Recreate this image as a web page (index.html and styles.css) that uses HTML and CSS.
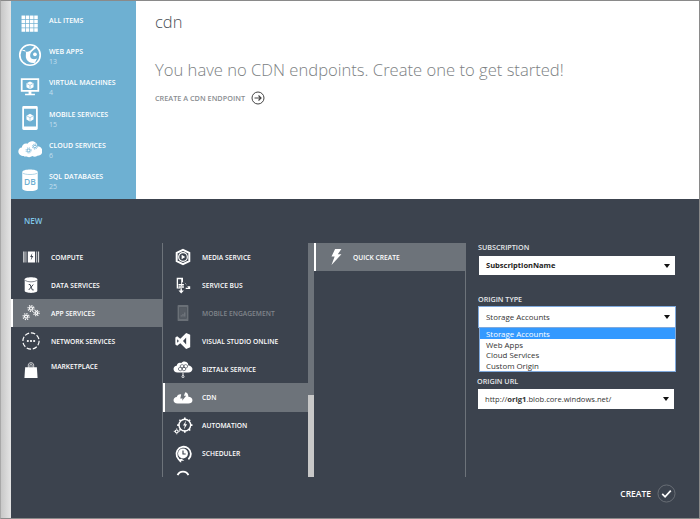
FILE: index.html
```html
<!DOCTYPE html>
<html lang="en">
<head>
  <meta charset="UTF-8" />
  <title>CDN - New</title>
  <link rel="stylesheet" href="styles.css">
</head>
<body>
  <div class="frame">
    <div class="gutter"></div>
    <div class="portal">
      <div class="top">
        <nav class="sidebar">
          <a class="side-item">
            <svg class="side-icon" viewBox="0 0 34 34"><g fill="#fff"><rect x="5" y="5" width="5" height="5"/><rect x="11" y="5" width="5" height="5"/><rect x="17" y="5" width="5" height="5"/><rect x="23" y="5" width="5" height="5"/><rect x="5" y="11" width="5" height="5"/><rect x="11" y="11" width="5" height="5"/><rect x="17" y="11" width="5" height="5"/><rect x="23" y="11" width="5" height="5"/><rect x="5" y="17" width="5" height="5"/><rect x="11" y="17" width="5" height="5"/><rect x="17" y="17" width="5" height="5"/><rect x="23" y="17" width="5" height="5"/><rect x="5" y="23" width="5" height="5"/><rect x="11" y="23" width="5" height="5"/><rect x="17" y="23" width="5" height="5"/><rect x="23" y="23" width="5" height="5"/></g></svg>
            <span class="side-text"><b>ALL ITEMS</b></span>
          </a>
          <a class="side-item">
            <svg class="side-icon" viewBox="0 0 34 34"><circle cx="17" cy="17" r="14.500" fill="none" stroke="#fff" stroke-width="2.400"/><path d="M5 10c4 2 7 3 10 2s6-4 8-7l3 2c-3 2-6 4-8 7-1 2-1 5 0 7s5 3 9 1l-3 6c-5 1-10-1-12-5s0-8-1-11-3-2-7-2z" fill="#fff"/><circle cx="24" cy="16" r="2.600" fill="#fff"/></svg>
            <span class="side-text"><b>WEB APPS</b><i>13</i></span>
          </a>
          <a class="side-item">
            <svg class="side-icon" viewBox="0 0 34 34"><path d="M4 6h26v19H19v3h5v2H10v-2h5v-3H4zM6.500 8.500v14h21v-14z" fill="#fff" fill-rule="evenodd"/><path d="M17 10.500l5 2.700v5.600l-5 2.700-5-2.700v-5.600z" fill="#fff"/><path d="M12.500 13.500l4.500 2.500 4.500-2.500M17 16v5" fill="none" stroke="#6eb0d2" stroke-width=".8"/></svg>
            <span class="side-text"><b>VIRTUAL MACHINES</b><i>4</i></span>
          </a>
          <a class="side-item">
            <svg class="side-icon" viewBox="0 0 34 34"><path d="M8 0h18a2 2 0 0 1 2 2v30a2 2 0 0 1-2 2H8a2 2 0 0 1-2-2V2a2 2 0 0 1 2-2zM8.500 4v25h17V4z" fill="#fff" fill-rule="evenodd"/><path d="M17 11l5 2.700v5.600l-5 2.700-5-2.700v-5.600z" fill="#fff"/><path d="M12.500 14l4.500 2.500 4.500-2.500M17 16.500v5" fill="none" stroke="#6eb0d2" stroke-width=".8"/></svg>
            <span class="side-text"><b>MOBILE SERVICES</b><i>15</i></span>
          </a>
          <a class="side-item">
            <svg class="side-icon" viewBox="0 0 34 34"><path d="M8 27c-5 0-8-3-8-6.500 0-3 2-5.500 5-5.500 0-4 4-7 8-5.500 2-4 9-5 12-1 1.500 1.500 2 3 2 4.500 4 0 7 3 7 7s-3 6.500-7 6.500c-2 1.500-5 2-7 .5-3 2-6 2-8 .5-1.500 0-3 0-4 0z" fill="#fff" transform="translate(0.500 0)"/><g fill="none" stroke="#6eb0d2"><circle cx="24" cy="13.500" r="2" stroke-width="1.400"/><circle cx="24" cy="13.500" r="3.600" stroke-width="1.400" stroke-dasharray="1.400 1.430"/><circle cx="15" cy="19" r="2" stroke-width="1.400"/><circle cx="15" cy="19" r="3.600" stroke-width="1.400" stroke-dasharray="1.400 1.430"/></g></svg>
            <span class="side-text"><b>CLOUD SERVICES</b><i>6</i></span>
          </a>
          <a class="side-item">
            <svg class="side-icon" viewBox="0 0 34 34"><path d="M6 6c0-5 22-5 22 0v23c0 5-22 5-22 0z" fill="#fff"/><path d="M6.500 7c3 3 18 3 21 0" fill="none" stroke="#6eb0d2" stroke-width=".8"/><text class="db" x="17" y="24" text-anchor="middle">DB</text></svg>
            <span class="side-text"><b>SQL DATABASES</b><i>25</i></span>
          </a>
        </nav>
        <main class="content">
          <h1>cdn</h1>
          <h2>You have no CDN endpoints. Create one to get started!</h2>
          <a class="create-link">CREATE A CDN ENDPOINT
            <svg class="arrow" viewBox="0 0 14 14"><circle cx="7" cy="7" r="6" fill="none" stroke="#444" stroke-width="1"/><path d="M3.500 7h6.500M7.500 4.500L10 7l-2.500 2.500" fill="none" stroke="#444" stroke-width="1.200"/></svg>
          </a>
        </main>
      </div>

      <section class="drawer">
        <div class="new-label">NEW</div>
        <div class="columns">
          <ul class="col col-a">
            <li>
              <svg class="icon" viewBox="0 0 20 20"><path d="M1.500 4h1.200v12H1.500zM4 4h.8v12H4zM16 4h.8v12H16zM18 4h1v12h-1zM6.500 4h8v12h-8z" fill="#fff"/><path d="M11.500 5.500l-2.500 4.500h1.600l-1 4 3-5h-1.700z" fill="#3c434e"/></svg>
              COMPUTE
            </li>
            <li>
              <svg class="icon" viewBox="0 0 20 20"><path d="M3 3.500c0-3 14-3 14 0v13c0 3-14 3-14 0z" fill="#fff"/><path d="M3.500 5c3 2 10 2 13 0" fill="none" stroke="#3c434e" stroke-width=".7"/><path d="M7.500 9.500h1.500l2.500 6h1.500M12.500 9.500l-5 6" fill="none" stroke="#3c434e" stroke-width="1.100"/></svg>
              DATA SERVICES
            </li>
            <li class="on">
              <svg class="icon" viewBox="0 0 20 20"><g fill="none" stroke="#fff"><circle cx="10" cy="5" r="1.700" stroke-width="1.400"/><circle cx="10" cy="5" r="3.300" stroke-width="1.400" stroke-dasharray="1.300 1.290"/><circle cx="16" cy="10" r="1.500" stroke-width="1.300"/><circle cx="16" cy="10" r="3" stroke-width="1.300" stroke-dasharray="1.200 1.160"/><circle cx="4.500" cy="14" r="1.700" stroke-width="1.400"/><circle cx="4.500" cy="14" r="3.300" stroke-width="1.400" stroke-dasharray="1.300 1.290"/></g></svg>
              APP SERVICES
            </li>
            <li>
              <svg class="icon wide" viewBox="0 0 20 20"><circle cx="10" cy="10" r="9" fill="none" stroke="#fff" stroke-width="1.300" stroke-dasharray="5 2"/><circle cx="6.500" cy="10" r="1.200" fill="#fff"/><circle cx="10" cy="10" r="1.200" fill="#fff"/><circle cx="13.500" cy="10" r="1.200" fill="#fff"/></svg>
              NETWORK SERVICES
            </li>
            <li class="short">
              <svg class="icon" viewBox="0 0 20 20"><path d="M3.500 7h13l.8 12H2.700z" fill="#fff"/><path d="M7 8V4.500c0-3.500 6-3.500 6 0V8M8.800 7V4.500c0-1.500 2.400-1.500 2.400 0V7" fill="none" stroke="#fff" stroke-width=".8"/></svg>
              MARKETPLACE
            </li>
          </ul>

          <div class="col-b">
            <ul class="col">
              <li>
                <svg class="icon" viewBox="0 0 20 20"><path d="M10 2l7 3.500v9L10 18l-7-3.500v-9z" fill="none" stroke="#fff" stroke-width="2.200"/><circle cx="10" cy="10" r="4.800" fill="none" stroke="#fff" stroke-width="1.300"/><path d="M8.500 7.500l4 2.500-4 2.500z" fill="#fff"/></svg>
                MEDIA SERVICE
              </li>
              <li>
                <svg class="icon" viewBox="0 0 20 20"><path d="M3 2h7v5l3 1 1.500 3.500H18v3h-5v-1.500h3l-4-5.500-3-.5V11H8V3.500H4.500V13H7v1H3z" fill="#fff"/><path d="M5 9h6v1.500H5zM5 11.500h6V13H5zM7.200 13.500h1.600V16H11l-3 3.500L5 16h2.200z" fill="#fff"/></svg>
                SERVICE BUS
              </li>
              <li class="off">
                <svg class="icon" viewBox="0 0 20 20"><path d="M5 1h10a1 1 0 0 1 1 1v16a1 1 0 0 1-1 1H5a1 1 0 0 1-1-1V2a1 1 0 0 1 1-1zM6 3.500v12.500h8V3.500z" fill="#6a7077" fill-rule="evenodd"/><path d="M6 3.500h8V16H6z" fill="#565c64"/><path d="M7.500 14v-1.500h1V14zM9.500 14v-3h1v3zM11.500 14V9.500h1V14z" fill="#7b8087"/></svg>
                MOBILE ENGAGEMENT
              </li>
              <li>
                <svg class="icon" viewBox="0 0 20 20"><path d="M13.500 1L18 3v14l-4.500 2-6.500-6.500-3.500 2.700L1.500 14V6l2-1.200L7 7.500zM3.500 8v4l2-2zM13.500 6l-3.500 4 3.500 4z" fill="#fff" fill-rule="evenodd"/></svg>
                VISUAL STUDIO ONLINE
              </li>
              <li>
                <svg class="icon wide" viewBox="0 0 22 20"><path d="M5 14c-3 0-4.500-2-4.500-4S2 6.500 4 6.500C4.500 3.500 7 2.500 9 3.500 10.500 1 15 1 16.500 4c0 .7.300 1.500.5 2 2.500 0 4.500 2 4.500 4s-2 4-4.500 4z" fill="#fff"/><path d="M8 6l2-1 2 1v2l-2 1-2-1zM12 6l2-1 2 1v2l-2 1-2-1zM6 9l2-1 2 1v2l-2 1-2-1zM10 9l2-1 2 1v2l-2 1-2-1z" fill="none" stroke="#3c434e" stroke-width=".7"/><path d="M11 14v4" stroke="#fff"/><circle cx="11" cy="18.500" r="1.200" fill="none" stroke="#fff" stroke-width=".8"/></svg>
                BIZTALK SERVICE
              </li>
              <li class="on">
                <svg class="icon wide" viewBox="0 0 22 20"><path d="M5 16c-3 0-4.500-1.500-4.500-3.500S2 9 4 9c.5-2 2.500-3.500 5-3l-1 4.500h2.500L10 13l4.500-5.500H12l1.500-4c2.500.5 3.500 2.500 3.500 5 2.500.2 4.500 1.500 4.500 4s-2 3.500-4.500 3.500z" fill="#fff"/></svg>
                CDN
              </li>
              <li>
                <svg class="icon wide" viewBox="0 0 22 20"><circle cx="13" cy="9" r="6.500" fill="none" stroke="#fff" stroke-width="1.500"/><path d="M13 .5v2.500M13 15v2.500M4.500 9H7M19 9h2.500M7 3l1.500 1.500M17.500 13.500L19 15M19 3l-1.500 1.500M8.500 13.500L7 15" stroke="#fff" stroke-width="1.800"/><path d="M14.500 4l-3.500 5.500h2l-1 4.500 3.500-6h-2z" fill="#fff"/><circle cx="4" cy="16" r="1.600" fill="none" stroke="#fff" stroke-width="1.300"/><path d="M4 12.800v1M4 18.200v1M.8 16h1M6.200 16h1" stroke="#fff" stroke-width="1.200"/></svg>
                AUTOMATION
              </li>
              <li>
                <svg class="icon" viewBox="0 0 20 20"><path d="M8 17.500A8 8 0 1 1 16 16" fill="none" stroke="#fff" stroke-width="2"/><circle cx="10" cy="9.500" r="5.500" fill="#fff"/><path d="M10 6v4h3" fill="none" stroke="#3c434e" stroke-width="1.300"/><path d="M11.500 17.500H8v2.300L5 17.500l3-2.500z" fill="#fff"/></svg>
                SCHEDULER
              </li>
              <li class="cut">
                <svg class="icon" viewBox="0 0 20 20"><path d="M4 8a6.500 6.500 0 0 1 12 0" fill="none" stroke="#fff" stroke-width="2"/></svg>
              </li>
            </ul>
            <div class="scrollbar"><div class="thumb"></div></div>
          </div>

          <ul class="col col-c">
            <li class="on">
              <svg class="icon" viewBox="0 0 20 20"><path d="M9 1h7l-4 6h4L5 19l3.500-9.500H5z" fill="#fff"/></svg>
              QUICK CREATE
            </li>
          </ul>

          <form class="col-d">
            <label>SUBSCRIPTION</label>
            <div class="select strong">SubscriptionName</div>
            <label class="gap">ORIGIN TYPE</label>
            <div class="select focus">Storage Accounts
              <ul class="dropdown">
                <li class="hit">Storage Accounts</li>
                <li>Web Apps</li>
                <li>Cloud Services</li>
                <li>Custom Origin</li>
              </ul>
            </div>
            <label class="shift">ORIGIN URL</label>
            <div class="select shift">http://<b>orig1</b>.blob.core.windows.net/</div>
          </form>
        </div>

        <div class="actions">
          CREATE
          <svg class="check" viewBox="0 0 20 20"><circle cx="10" cy="10" r="9" fill="none" stroke="#6a7077" stroke-width="1"/><path d="M5.500 10.500l3 3 6-6.500" fill="none" stroke="#fff" stroke-width="1.800"/></svg>
        </div>
      </section>
    </div>
  </div>
</body>
</html>
```

FILE: styles.css
```css
* { box-sizing: border-box; }
html, body { margin: 0; height: 100%; }
body {
  font-family: "Open Sans", "Noto Sans", Arial, sans-serif;
  background-color: #fff;
  overflow: hidden;
}
ul { list-style: none; margin: 0; padding: 0; }

.frame {
  display: flex;
  width: 700px;
  height: 519px;
  border: 1px solid #8a8a8a;
  border-left-color: #a8a8a8;
}
.gutter {
  width: 10px;
  background: linear-gradient(to right, #c8c8c8, #e4e4e4);
}
.portal {
  flex: 1;
  display: flex;
  flex-direction: column;
}

.top {
  display: flex;
  height: 198px;
}
.sidebar {
  width: 125px;
  background-color: #6eb0d2;
  padding-top: 7px;
}
.side-item {
  display: flex;
  height: 31.200px;
  color: #fff;
}
.side-icon {
  width: 24px;
  height: 24px;
  margin: 4px 7px 0 7px;
  flex: none;
}
.side-text {
  padding-top: 8px;
}
.side-text b {
  display: block;
  font-size: 7px;
  font-weight: 600;
  line-height: 10px;
}
.side-text i {
  display: block;
  font-style: normal;
  font-size: 7px;
  line-height: 10px;
  color: #c2dfee;
}
.db {
  font-size: 12px;
  font-weight: 600;
  fill: #6eb0d2;
}

.content {
  flex: 1;
  background-color: #fff;
  padding: 9px 19px;
}
.content h1 {
  margin: 0;
  font-size: 16.500px;
  font-weight: 300;
  line-height: 24px;
  color: #4a4f57;
}
.content h2 {
  margin: 24px 0 0;
  font-size: 16.600px;
  font-weight: 300;
  line-height: 24px;
  color: #7c7f83;
  white-space: nowrap;
}
.create-link {
  display: flex;
  align-items: center;
  gap: 6px;
  margin-top: 9px;
  font-size: 7.300px;
  font-weight: 600;
  color: #8a8d91;
}
.arrow { width: 14px; height: 14px; }

.drawer {
  flex: 1;
  background-color: #3c434e;
  color: #fff;
  display: flex;
  flex-direction: column;
}
.new-label {
  padding: 16px 0 0 13px;
  font-size: 8px;
  font-weight: 600;
  line-height: 12px;
  color: #7fc6e8;
  height: 44px;
}
.columns {
  display: flex;
  height: 234px;
}
.col li {
  display: flex;
  align-items: center;
  height: 28px;
  font-size: 6.700px;
  font-weight: 600;
  white-space: nowrap;
}
.col li.short { height: 22px; }
.col li.short .icon { margin-top: 8px; }
.col li.cut { height: 10px; overflow: hidden; align-items: flex-start; }
.col li.off { color: #80858b; }
.col li.on {
  background-color: #6d737a;
  border-left: 2px solid #fff;
}
.icon {
  width: 18px;
  height: 18px;
  flex: none;
  margin: 0 11px 0 11px;
}
.icon.wide { width: 20px; margin: 0 10px 0 10px; }
.col li.on .icon { margin-left: 9px; }
.col li.on .icon.wide { margin-left: 8px; }

.col-a {
  width: 152px;
  border-right: 1px solid #6d737a;
}
.col-b {
  display: flex;
  width: 151px;
  overflow: hidden;
}
.col-b .col {
  width: 145px;
}
.col-b .col li { height: 28.100px; }
.col-b .col li.cut { height: 10px; }
.col-b .icon { margin-right: 10px; }
.col-b .icon.wide { margin-right: 9px; }
.scrollbar {
  width: 6px;
  background-color: #c8c8c8;
}
.thumb {
  height: 152px;
  background-color: #6d737a;
}
.col-c {
  width: 152px;
  border-right: 1px solid #6d737a;
}
.col-c li.on .icon { margin-right: 8.500px; margin-left: 10.500px; }

.col-d {
  padding: 0 0 0 12px;
  width: 210px;
}
.col-d label {
  display: block;
  font-size: 7.200px;
  font-weight: 600;
  line-height: 8px;
  margin-bottom: 4px;
  color: #e6e8ea;
}
.col-d label.gap { margin-top: 19px; margin-bottom: 3px; }
.col-d label.shift { margin-left: -1px; margin-bottom: 3px; }
.select {
  position: relative;
  width: 198px;
  height: 21px;
  background-color: #fff;
  border: 1px solid #3c434e;
  padding-left: 7px;
  font-size: 7.900px;
  line-height: 19px;
  color: #333;
}
.select::after {
  content: "";
  position: absolute;
  right: 5px;
  top: 8px;
  border: 3px solid transparent;
  border-top: 4px solid #111;
  border-bottom: 0;
}
.select.strong { font-weight: 700; font-size: 7.500px; color: #222; }
.select.focus { border-color: #7fa9dc; height: 22px; margin-bottom: 49px; line-height: 20px; }
.select.shift { margin-left: -1px; height: 22px; font-size: 7.600px; line-height: 20px; }
.dropdown {
  position: absolute;
  left: 0;
  top: 21px;
  width: 197px;
  background-color: #fff;
  border: 1px solid #7fa9dc;
  border-top: 0;
  line-height: 12px;
}
.dropdown li { padding-left: 6px; height: 10.700px; }
.dropdown .hit { background-color: #3399ff; color: #fff; }

.actions {
  display: flex;
  align-items: center;
  justify-content: flex-end;
  gap: 6px;
  padding: 7px 23px 0 0;
  font-size: 8.500px;
  font-weight: 600;
}
.check { width: 19px; height: 19px; }
```
